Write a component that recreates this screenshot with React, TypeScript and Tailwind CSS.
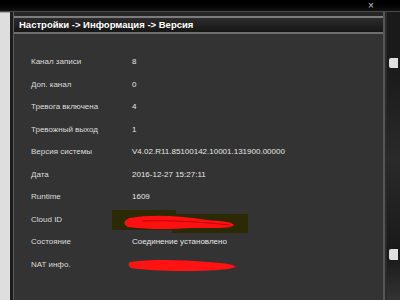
import React from 'react';

const ROWS: { label: string; value: string }[] = [
  { label: 'Канал записи', value: '8' },
  { label: 'Доп. канал', value: '0' },
  { label: 'Тревога включена', value: '4' },
  { label: 'Тревожный выход', value: '1' },
  { label: 'Версия системы', value: 'V4.02.R11.85100142.10001.131900.00000' },
  { label: 'Дата', value: '2016-12-27 15:27:11' },
  { label: 'Runtime', value: '1609' },
  { label: 'Cloud ID', value: '' },
  { label: 'Состояние', value: 'Соединение установлено' },
  { label: 'NAT инфо.', value: '' },
];

function CloudScribble() {
  return (
    <svg width="140" height="28" viewBox="0 0 140 28" className="absolute left-[-20px] top-[-7px]">
      <path d="M0 2 L64 2 L64 6 L136 6 L136 25 L60 25 L60 22 L0 22 Z" fill="#2b2a05" />
      <path d="M18 10 C40 6 70 8 95 12 C110 13 120 14 122 17 C118 21 100 20 80 20 C60 21 40 22 16 19 C10 16 12 12 18 10 Z" fill="#ff1010" />
      <path d="M30 13 C60 12 90 14 118 17" stroke="#c00000" strokeWidth="1" fill="none" />
    </svg>
  );
}

function NatScribble() {
  return (
    <svg width="120" height="18" viewBox="0 0 120 18" className="absolute left-[-4px] top-[-4px]">
      <path d="M2 6 C25 3 55 4 80 6 C95 7 105 8 108 11 C100 14 80 15 55 15 C35 15 15 14 3 12 C0 10 0 7 2 6 Z" fill="#ff1212" />
    </svg>
  );
}

export default function App() {
  return (
    <div className="w-[400px] h-[300px] bg-black flex flex-col overflow-hidden font-['Liberation_Sans',Arial,sans-serif]">
      <div className="h-[11px] bg-gradient-to-b from-black to-[#141414] flex items-center pl-[368px] shrink-0">
        <span className="text-[10px] leading-[10px] text-[#c8c8c8]">×</span>
      </div>
      <div className="h-[1px] bg-[#4a4a4a] shrink-0" />
      <div className="flex flex-1 min-h-0">
        <div className="w-[10px] bg-[#dedede] border-t border-[#aaa]" />
        <div className="w-[3px] bg-[#1c1c1c]" />
        <div className="w-[1px] bg-[#5e5e5e]" />
        <div className="flex-1 flex flex-col bg-[#333333]">
          <div className="h-[4px] bg-[#262626]" />
          <div className="h-[2px] bg-[#7c7c7c]" />
          <div className="h-[14px] bg-gradient-to-b from-[#2c2c2c] to-[#161616] flex items-center pl-[5px] text-[9.5px] font-bold text-white">
            Настройки -&gt; Информация -&gt; Версия
          </div>
          <div className="h-[2px] bg-[#6e6e6e]" />
          <div className="flex flex-col pt-[17px] pl-[17px] text-[8px] text-[#dcdcdc]">
            {ROWS.map((r) => (
              <div key={r.label} className="h-[22.5px] flex items-center">
                <div className="w-[101px] shrink-0">{r.label}</div>
                <div className="relative h-[10px] flex items-center text-[#e6e6e6]">
                  {r.label === 'Cloud ID' && <CloudScribble />}
                  {r.label === 'NAT инфо.' && <NatScribble />}
                  {r.value}
                </div>
              </div>
            ))}
          </div>
        </div>
        <div className="w-[2px] bg-[#565656]" />
        <div className="w-[2px] bg-[#2a2a2a]" />
        <div className="w-[13px] bg-[#1a1a1a] flex flex-col">
          <div className="h-[46px]" />
          <div className="ml-[2px] w-[9px] h-[10px] bg-[#e0e0e0] rounded-l-[2px]" />
          <div className="flex-1 bg-gradient-to-b from-[#1a1a1a] via-[#2a2a2a] to-[#1a1a1a]" />
          <div className="ml-[2px] w-[9px] h-[11px] bg-[#e0e0e0] rounded-l-[2px]" />
          <div className="h-[40px] bg-gradient-to-b from-[#1c1c1c] to-[#333]" />
        </div>
      </div>
    </div>
  );
}
